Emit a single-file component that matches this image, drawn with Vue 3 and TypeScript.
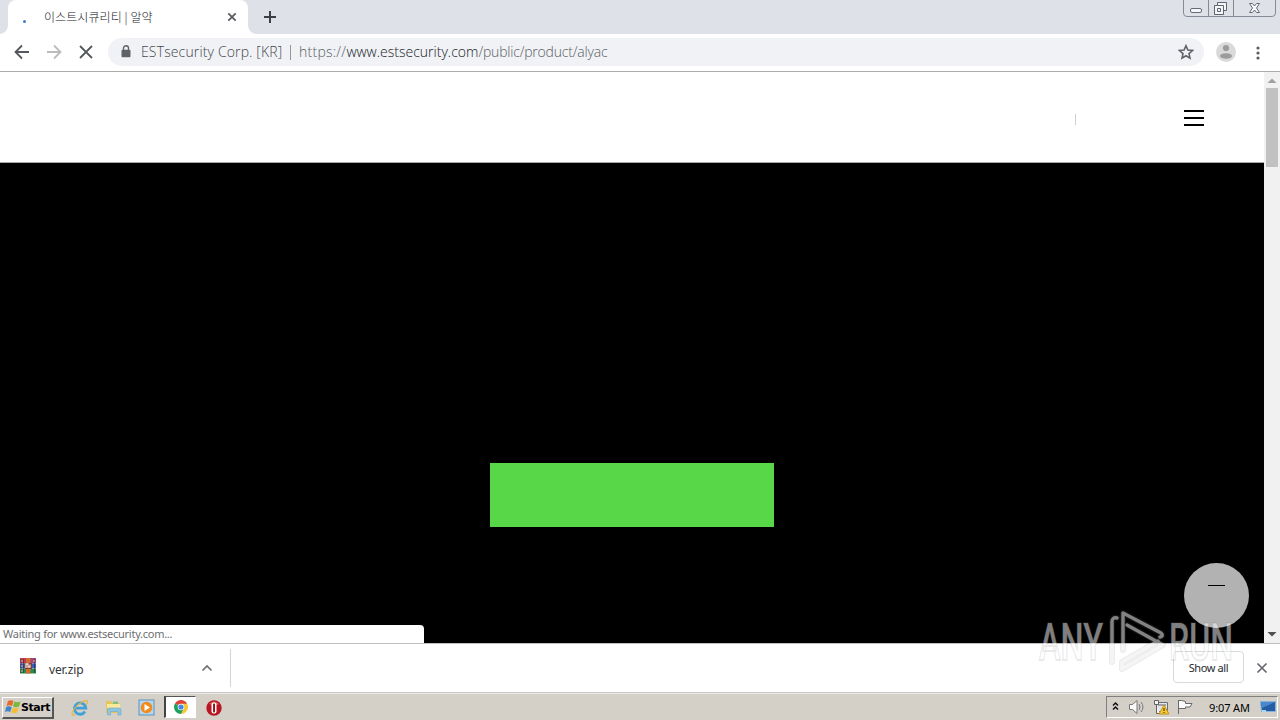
<script setup lang="ts">
interface Address {
  owner: string
  scheme: string
  host: string
  path: string
}
const address: Address = {
  owner: 'ESTsecurity Corp. [KR]',
  scheme: 'https://',
  host: 'www.estsecurity.com',
  path: '/public/product/alyac',
}
const tabTitle = '이스트시큐리티 | 알약'
const status = 'Waiting for www.estsecurity.com...'
const download = 'ver.zip'
const clock = '9:07 AM'
</script>

<template>
  <div class="screen">
    <header class="tabs">
      <div class="tab">
        <span class="spinner"></span>
        <span class="title">{{ tabTitle }}</span>
        <svg class="tab-close" width="10" height="10" viewBox="0 0 10 10"><path d="M1.3 1.3 8.7 8.7M8.7 1.3 1.3 8.7" stroke="#5a5d61" stroke-width="1.8" /></svg>
        <i class="foot"></i>
      </div>
      <svg class="plus" width="12" height="12" viewBox="0 0 12 12"><path d="M6 0V12M0 6H12" stroke="#3c4043" stroke-width="2" /></svg>
      <svg class="window-buttons" width="94" height="18" viewBox="0 0 94 18" fill="none">
        <path d="M.5 0V13Q.5 16.5 4 16.5H89Q92.500 16.500 92.500 13V0M25.500 0V16M50.500 0V16" stroke="#858b96" />
        <rect x="7.500" y="8.500" width="11" height="4" rx="1.500" fill="#f5f6f8" stroke="#666b75" />
        <path d="M34.500 2.500H43.500V10.500H40.500V14.500H31.500V5.500H34.500Z" fill="#f5f6f8" stroke="#5e636d" />
        <path d="M34.500 5.500H40.500V11M34.500 8.500H37.500V11.500H34.500Z" stroke="#5e636d" />
        <path d="M66.500 3.500H69.500L71.500 6 73.500 3.500H76.500L73.500 8 76.500 12.500H73.500L71.500 10 69.500 12.500H66.500L69.500 8Z" fill="#f7f8fa" stroke="#666b75" />
      </svg>
    </header>

    <nav class="toolbar">
      <svg class="nav-icons" width="108" height="37" viewBox="0 34 108 37" fill="none" stroke-width="1.800">
        <path d="M29 52H16M22 45.500 15.500 52 22 58.500" stroke="#55585c" />
        <path d="M47 52H60M54 45.500 60.500 52 54 58.500" stroke="#b9bbbd" />
        <path d="M80 46 92 58M92 46 80 58" stroke="#55585c" />
      </svg>
      <div class="omnibox">
        <svg class="lock" width="10" height="13" viewBox="0 0 10 13"><path d="M2.500 6V3.300a2.500 2.500 0 0 1 5 0V6" fill="none" stroke="#5f6368" stroke-width="1.400" /><rect x=".5" y="4.800" width="9" height="7.500" rx="1" fill="#5f6368" /></svg>
        <span class="owner">{{ address.owner }}</span>
        <i class="divider"></i>
        <span class="url"><span class="scheme">{{ address.scheme }}</span><span class="host">{{ address.host }}</span><span class="path">{{ address.path }}</span></span>
        <svg class="star" width="16" height="16" viewBox="0 0 16 16"><path d="M8 1.700 9.900 6.100 14.500 6.500 11 9.600 12 14.200 8 11.800 4 14.200 5 9.600 1.500 6.500 6.100 6.100Z" fill="none" stroke="#5f6368" stroke-width="1.600" /></svg>
      </div>
      <svg class="avatar" width="20" height="20" viewBox="0 0 20 20"><circle cx="10" cy="10" r="10" fill="#dadada" /><circle cx="10" cy="6" r="3.100" fill="#9c9c9c" /><ellipse cx="10" cy="14" rx="6" ry="2.800" fill="#9c9c9c" /></svg>
      <svg class="dots" width="4" height="14" viewBox="0 0 4 14" fill="#5a5d61"><circle cx="2" cy="2" r="1.600" /><circle cx="2" cy="7" r="1.600" /><circle cx="2" cy="12" r="1.600" /></svg>
    </nav>

    <main class="viewport">
      <div class="page">
        <div class="site-header">
          <i class="separator"></i>
          <div class="burger"><i></i><i></i><i></i></div>
        </div>
        <section class="hero">
          <div class="cta"></div>
          <div class="fab"><i></i></div>
        </section>
        <div class="status">{{ status }}</div>
      </div>
      <div class="scrollbar">
        <svg width="16" height="16" viewBox="0 0 16 16"><path d="M3.500 11 8 6.500 12.500 11Z" fill="#a0a0a0" /></svg>
        <div class="thumb"></div>
        <svg class="down" width="16" height="17" viewBox="0 0 16 17"><path d="M3.500 6 8 10.500 12.500 6Z" fill="#505050" /></svg>
      </div>
    </main>

    <footer class="downloads">
      <div class="item">
        <svg class="archive" width="16" height="16" viewBox="0 0 16 16">
          <path d="M0 0H16V5H0Z" fill="#c43a50" /><path d="M0 5.300H16V10.300H0Z" fill="#3560b8" /><path d="M0 10.600H16V15.500H0Z" fill="#2b8b4c" />
          <path d="M9 0H16V5H9Z" fill="#a54277" />
          <path d="M1 1V15M3.500 1V15M14.500 1V15" stroke="#3f2940" stroke-width=".7" />
          <path d="M6 0H10.500V15.500H6Z" fill="#d36b2c" /><path d="M4.500 5H12V11H4.500Z" fill="#7d3e38" />
          <path d="M6 10V6H8V9H10V6.500" fill="none" stroke="#f1dfd0" stroke-width="1.300" />
          <path d="M1 3H3M1 8H3M1 13H3M13 3H15" stroke="#d4c99d" />
        </svg>
        <span class="filename">{{ download }}</span>
        <svg class="chevron" width="12" height="8" viewBox="0 0 12 8"><path d="M1.500 6.500 6 2 10.500 6.500" fill="none" stroke="#6c6f73" stroke-width="1.700" /></svg>
      </div>
      <button class="show-all">Show all</button>
      <svg class="shelf-close" width="12" height="12" viewBox="0 0 12 12"><path d="M1.500 1.500 10.500 10.500M10.500 1.500 1.500 10.500" stroke="#66696d" stroke-width="1.700" /></svg>
    </footer>

    <footer class="taskbar">
      <button class="start">
        <svg width="17" height="16" viewBox="0 0 17 16">
          <path d="M3 2Q6 .3 8.500 2L7 7Q4.500 5.500 1.500 7Z" fill="#e66a2c" /><path d="M9.500 2.500Q12 4 15.500 2.500L14 7.500Q11 9 8 7.500Z" fill="#79b83b" />
          <path d="M1.200 8Q4 6.500 6.700 8.200L5.200 13Q3 11.500 0 13Z" fill="#3e84c8" /><path d="M7.700 8.700Q10.500 10 13.700 8.700L12.200 13.500Q9.500 15 6.300 13.500Z" fill="#f3bd35" />
        </svg>
        <span>Start</span>
      </button>
      <svg class="ie" width="18" height="18" viewBox="0 0 18 18" fill="none">
        <path d="M14 12.500A5.700 5.700 0 1 1 14.800 9.200H4.500" stroke="#42a0d8" stroke-width="2.800" />
        <path d="M4 15.500C0 18 0 14 4 9 9 3 16 0 16.500 2.500 16.700 3.500 16 4.500 15 6" stroke="#e3b73c" stroke-width="1.100" />
      </svg>
      <svg class="explorer" width="18" height="18" viewBox="0 0 18 18">
        <path d="M1 2H6L7.500 4H15V14H1Z" fill="#e5c45e" /><path d="M2 5H15V9H2Z" fill="#f8e99b" /><path d="M8 2.500H13V5H8Z" fill="#83bd82" />
        <path d="M2.500 16V11Q2.500 9 4.500 9H14Q16 9 16 11V16H13V12.500H5.500V16Z" fill="#8cc5e4" stroke="#6aa7cd" stroke-width=".6" />
      </svg>
      <svg class="player" width="17" height="17" viewBox="0 0 17 17"><rect x="1" y="1" width="15" height="15" fill="#b4d6ef" stroke="#5d91bd" /><circle cx="8.500" cy="8.500" r="5.800" fill="#f18b1c" /><path d="M6.500 5 12 8.500 6.500 12Z" fill="white" /></svg>
      <div class="active">
        <svg width="14" height="14" viewBox="0 0 14 14">
          <path d="M7 7 .94 3.500A7 7 0 0 1 13.060 3.500Z" fill="#db4437" /><path d="M7 7 .94 3.500A7 7 0 0 0 7 14L10 8.700Z" fill="#21a05a" /><path d="M7 3.700H13.150A7 7 0 0 1 7 14L10 8.700Z" fill="#f6c72e" />
          <circle cx="7" cy="7" r="3.300" fill="white" /><circle cx="7" cy="7" r="2.600" fill="#4385e8" />
        </svg>
      </div>
      <svg class="opera" width="16" height="16" viewBox="0 0 16 16"><circle cx="8" cy="8" r="7.700" fill="#b81620" /><path d="M3 4Q8-1 13 4Q10 6 3 4" fill="#dc6461" /><rect x="5.500" y="2.500" width="5" height="11" rx="2" fill="white" /><rect x="7.100" y="3.500" width="1.900" height="9" rx=".8" fill="#8f1119" /></svg>
      <div class="tray">
        <svg class="tray-icons" width="90" height="20" viewBox="1107 697 90 20" fill="none">
          <path d="M1113 705.500 1115.500 703 1118 705.500M1113 709.500 1115.500 707 1118 709.500" stroke="#111" stroke-width="1.500" />
          <path d="M1129.500 704.500H1132.500L1137 700.500V713.500L1132.500 709.500H1129.500Z" fill="#fafafa" stroke="#77777a" />
          <path d="M1139 704Q1141 707 1139 710M1141 702Q1145 707 1141 712" stroke="#77777a" />
          <path d="M1156.500 702.500H1167.500V711.500H1156.500Z" fill="#e3e4e5" stroke="#68717b" /><path d="M1154.500 700.500H1158.500V704.500H1154.500ZM1156.500 705V713.500H1160M1158 705H1166" fill="#f4f4f4" stroke="#626265" />
          <path d="M1164 705 1169 714H1159Z" fill="#f8c831" stroke="#c49416" /><path d="M1164 708V711M1164 712V713" stroke="#29241c" />
          <path d="M1178.500 700V714M1179 700.500Q1181 700 1185.500 701.500V703.500H1192L1190 707H1185.500V708.500H1179" fill="#fafafa" stroke="#6a6a6c" />
        </svg>
        <span class="clock">{{ clock }}</span>
        <svg class="desktop" width="16" height="14" viewBox="0 0 16 14"><path d="M.5 1.500H15.500V11.500H1.500Z" fill="#245ca5" stroke="#87b3db" /><path d="M1 2H15L2 8Z" fill="#4988cd" /><path d="M2 10H6V12H2Z" fill="#b1d4ed" /></svg>
      </div>
    </footer>

    <svg class="watermark" width="208" height="72" viewBox="1034 604 208 72" fill="none">
      <text x="1039" y="660" textLength="64" lengthAdjust="spacingAndGlyphs">ANY</text>
      <text x="1169" y="660" textLength="64" lengthAdjust="spacingAndGlyphs">RUN</text>
      <path d="M1112 662V622Q1112 617 1117 618M1123 650V613L1161 633Q1164 636 1160 637M1127 625 1163 645 1122 669V662L1158 641" stroke="#777" stroke-opacity=".14" stroke-width="6" stroke-linecap="round" stroke-linejoin="round" />
      <path d="M1112 662V622Q1112 617 1117 618M1123 650V613L1161 633Q1164 636 1160 637M1127 625 1163 645 1122 669V662L1158 641" stroke="#fff" stroke-opacity=".48" stroke-width="3.500" stroke-linecap="round" stroke-linejoin="round" />
    </svg>
  </div>
</template>

<style>
body { margin: 0; overflow: hidden; }
</style>

<style scoped>
* { box-sizing: border-box; }
svg { display: block; flex: none; }
.screen { width: 1280px; height: 720px; position: relative; display: flex; flex-direction: column; overflow: hidden; background: #fff; font-family: "Noto Sans", "Liberation Sans", sans-serif; }
.tabs { height: 34px; display: flex; background: #dee1e7; padding-left: 8px; flex: none; }
.tab { width: 240px; height: 34px; background: #fff; border-radius: 8px 8px 0 0; display: flex; align-items: center; position: relative; }
.tab::before, .foot { content: ""; position: absolute; bottom: 0; width: 8px; height: 8px; }
.tab::before { left: -8px; background: radial-gradient(circle at 0 0, transparent 7.500px, #fff 8px); }
.foot { right: -8px; background: radial-gradient(circle at 100% 0, transparent 7.500px, #fff 8px); }
.spinner { width: 3px; height: 3px; border-radius: 50%; background: #3c7fc5; margin: 9px 17px 0 15px; }
.title { width: 176px; font: 300 12px/18px "Noto Sans CJK KR", sans-serif; letter-spacing: .08px; white-space: nowrap; color: #202226; padding-left: 1px; }
.tab-close { margin-left: 8px; }
.plus { margin: 11px 0 0 16px; }
.window-buttons { margin-left: auto; margin-right: 3px; }
.toolbar { height: 38px; border-bottom: 1px solid #acacac; display: flex; align-items: center; flex: none; }
.omnibox { width: 1096px; height: 28px; border-radius: 14px; background: #f0f2f5; display: flex; align-items: center; padding: 0 10px 0 13px; font: 300 14px/20px "Open Sans", "Noto Sans", sans-serif; white-space: nowrap; margin-top: -1px; }
.lock { margin-top: -1px; }
.owner { width: 143px; margin-left: 10px; color: #44484d; letter-spacing: .14px; }
.divider { width: 1px; height: 15px; background: #94979a; margin: 0 8px 0 6px; }
.scheme, .path { color: #5c6065; }
.scheme { letter-spacing: .25px; }
.path { letter-spacing: -.2px; }
.host { color: #171a1f; }
.star { margin-left: auto; }
.avatar { margin-left: 12px; margin-top: -2px; }
.dots { margin-left: 20px; margin-right: 20px; }
.viewport { height: 571px; display: flex; flex: none; }
.page { width: 1264px; position: relative; display: flex; flex-direction: column; }
.site-header { height: 91px; border-bottom: 1px solid #aaa; display: flex; align-items: flex-start; justify-content: flex-end; padding: 38px 60px 0 0; }
.separator { width: 1px; height: 11px; background: #d0d0d0; margin: 4px 108px 0 0; }
.burger { width: 20px; display: grid; gap: 5px; }
.burger i { height: 2px; background: #000; }
.hero { flex: 1; background: #000; display: flex; justify-content: center; padding-top: 300px; position: relative; }
.cta { width: 284px; height: 64px; background: #58d848; }
.fab { position: absolute; right: 15px; bottom: 15px; width: 65px; height: 65px; border-radius: 50%; background: #b2b2b2; display: flex; justify-content: center; padding-top: 22px; }
.fab i { width: 17px; height: 1px; background: #000; }
.status { position: absolute; left: 0; bottom: 0; width: 424px; height: 18px; background: #fff; border-radius: 0 4px 0 0; padding-left: 3px; font-size: 11px; line-height: 18px; letter-spacing: -.26px; color: #6c6e71; }
.scrollbar { width: 16px; background: #f1f1f1; display: flex; flex-direction: column; }
.thumb { height: 79px; margin: 0 2px; background: #c1c1c1; }
.down { margin-top: auto; }
.downloads { height: 50px; border-top: 1px solid #bfbfbf; border-bottom: 1px solid #c7c6c2; display: flex; align-items: center; flex: none; }
.item { width: 231px; height: 38px; border-right: 1px solid #d2d4d6; display: flex; align-items: center; padding-left: 20px; }
.archive { margin-top: -4px; }
.filename { width: 140px; margin: 3px 0 0 13px; font-size: 12px; color: #333538; letter-spacing: -.12px; }
.chevron { margin-left: 12px; margin-top: -1px; }
.show-all { width: 71px; height: 32px; margin-left: auto; border: 1px solid #d8d9db; border-radius: 4px; background: #fff; padding: 0; color: #292b2e; font: 11px "Noto Sans", sans-serif; letter-spacing: -.38px; margin-top: -2px; }
.shelf-close { margin: -1px 12px 0; }
.taskbar { height: 27px; background: #d4d0c8; display: flex; align-items: center; border-top: 1px solid #eeece7; flex: none; }
.start { width: 52px; height: 22px; margin: 1px 0 0 2px; padding: 0 0 0 2px; display: flex; align-items: center; background: #d4d0c8; border: solid; border-width: 1px 2px 2px 1px; border-color: #fff #555 #555 #fff; font: 700 11px "DejaVu Sans", sans-serif; letter-spacing: -.45px; color: #000; }
.start span { margin-left: -1px; }
.ie { margin: 1px 0 0 17px; }
.explorer { margin: 1px 0 0 16px; }
.player { margin: 0 0 0 15px; }
.active { width: 32px; height: 22px; background: #fff; margin: 0 0 0 9px; border: 1px solid #fff; border-top-color: #555; border-left: 2px solid #444; display: flex; align-items: center; justify-content: center; }
.opera { margin: 1px 0 0 10px; }
.tray { width: 172px; height: 22px; margin: 0 2px 0 auto; border: 1px solid; border-color: #808080 #fff #fff #808080; display: flex; align-items: center; }
.clock { width: 42px; margin-left: 12px; font-size: 11px; letter-spacing: -.12px; white-space: nowrap; color: #000; }
.desktop { margin-left: 9px; }
.watermark { position: absolute; left: 1034px; top: 604px; pointer-events: none; overflow: visible; }
.watermark text { font: 500 52px Roboto, sans-serif; fill: #fff; fill-opacity: .5; stroke: #777; stroke-opacity: .16; stroke-width: 2px; }
</style>
